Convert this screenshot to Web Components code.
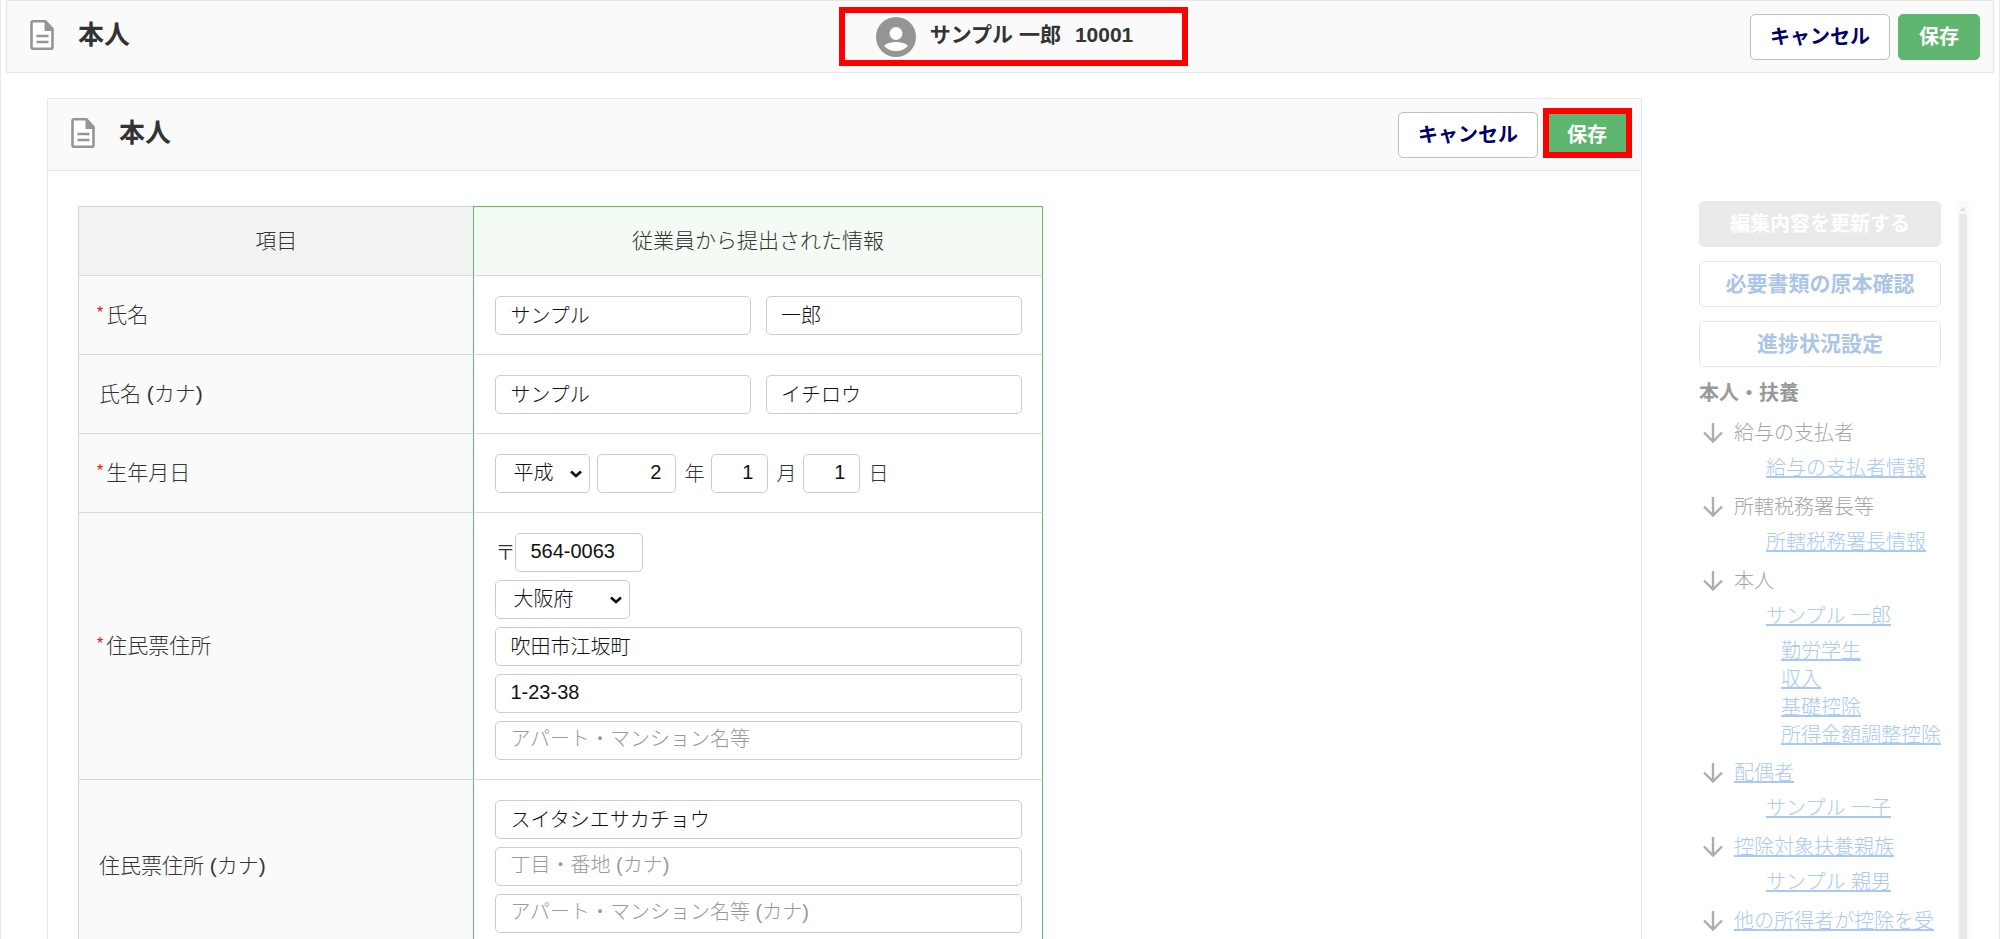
<!DOCTYPE html>
<html lang="ja">
<head>
<meta charset="utf-8">
<title>本人</title>
<style>
  :root {
    --line: #e6e6e6;
    --bar-bg: #fafafa;
    --green: #5fb66f;
  }
  body {
    margin: 0;
    background: #fff;
    color: #333;
    font: 20px/28px "Liberation Sans", "Noto Sans CJK JP", sans-serif;
  }
</style>
</head>
<body>
<year-end-page></year-end-page>

<script>
const define = (tag, html) => {
  customElements.define(tag, class extends HTMLElement {
    constructor() {
      super()
      this.attachShadow({ mode: 'open' }).innerHTML = html
    }
  })
}

define('ui-button', `
  <style>
    :host { display: block; }
    button {
      box-sizing: border-box;
      display: block;
      width: 100%;
      height: 46px;
      margin: 0;
      padding: 0 19px;
      border: 1px solid #bfbfbf;
      border-radius: 5px;
      background: #fff;
      color: #000066;
      font: inherit;
      font-weight: bold;
      white-space: nowrap;
      cursor: pointer;
    }
    :host([variant="primary"]) button {
      padding: 0 20px;
      border-color: var(--green);
      background: var(--green);
      color: #fff;
    }
    :host([variant="muted"]) button {
      border-color: #eaeaea;
      background: #eaeaea;
      color: #fff;
    }
    :host([variant="faded"]) button {
      border-color: #e5e5e5;
      color: #abc5e8;
      font-size: 21px;
    }
  </style>
  <button type="button"><slot></slot></button>
`)

// red frame laid over whatever is slotted in
define('callout-frame', `
  <style>
    :host { display: block; position: relative; }
    .frame {
      position: absolute;
      inset: var(--callout-inset, -6px);
      border: 6px solid #f00;
      pointer-events: none;
    }
  </style>
  <slot></slot>
  <div class="frame"></div>
`)

define('title-bar', `
  <style>
    :host {
      display: grid;
      grid-template-columns: 1fr auto 1fr;
      align-items: center;
      box-sizing: border-box;
      min-height: 73px;
      padding: 0 13px 0 22px;
      background: var(--bar-bg);
      border: 1px solid var(--line);
    }
    .title { display: flex; align-items: center; gap: 23px; }
    .title svg { display: block; margin-bottom: 4px; }
    h1 {
      margin: 0 0 4px;
      font-size: 26px;
      line-height: 36px;
    }
    .actions { display: flex; justify-content: flex-end; gap: 8px; }
  </style>
  <div class="title">
    <svg width="26" height="32" viewBox="0 0 26 32" aria-hidden="true">
      <path d="M4.300 2.300h12.200l7 7.500v18.500a1.500 1.500 0 0 1-1.500 1.500H4.300a1.800 1.800 0 0 1-1.800-1.800V4.100a1.800 1.800 0 0 1 1.800-1.800z" fill="#fff" stroke="#959595" stroke-width="2.600" stroke-linejoin="round"/>
      <path d="M15.500 2h1.500l7.500 8v2h-9z" fill="#959595"/>
      <path d="M7.500 17h12M7.500 23h12" stroke="#959595" stroke-width="2.400"/>
    </svg>
    <h1><slot name="title"></slot></h1>
  </div>
  <div><slot name="center"></slot></div>
  <div class="actions"><slot name="actions"></slot></div>
`)

define('user-badge', `
  <style>
    :host {
      display: flex;
      align-items: center;
      gap: 14px;
      font-size: 21px;
      font-weight: bold;
      white-space: nowrap;
    }
    svg { display: block; }
    .name { margin-bottom: 4px; }
  </style>
  <svg width="40" height="40" viewBox="0 0 40 40" aria-hidden="true">
    <circle cx="20" cy="20" r="20" fill="#959595"/>
    <ellipse cx="20" cy="16.500" rx="6.500" ry="6.500" fill="#fff"/>
    <path d="M8 29c3-3 7-4 12-4s9 1 12 4c-3 3-7 5-12 5s-9-2-12-5z" fill="#fff"/>
  </svg>
  <span class="name"><slot></slot></span>
  <span class="name"><slot name="code"></slot></span>
`)

const chevron = `
  <svg width="14" height="8" viewBox="0 0 14 8" aria-hidden="true">
    <path d="M2 1.500l5 4.500l5-4.500" fill="none" stroke="#111" stroke-width="2.600"/>
  </svg>
`

define('person-form', `
  <style>
    :host { display: block; padding: 35px 32px 0 30px; }
    table {
      width: 63%;
      border-collapse: separate;
      border-spacing: 0;
      table-layout: fixed;
    }
    .items { width: 41%; }
    th, td {
      box-sizing: border-box;
      border-bottom: 1px solid #d9d9d9;
    }
    th {
      border-left: 1px solid #d4d4d4;
      font-size: 21px;
      font-weight: 300;
    }
    thead th {
      height: 70px;
      padding: 0;
      border-top: 1px solid #d4d4d4;
      background: #f2f2f2;
    }
    thead .sent {
      border-top-color: #5cbd6c;
      border-left-color: #5cbd6c;
      border-right: 1px solid #5cbd6c;
      background: #f4fbf5;
    }
    tbody th {
      padding: 0 0 0 20px;
      background: var(--bar-bg);
      text-align: left;
    }
    tbody .required { padding-left: 18px; }
    .required::before {
      content: "*";
      margin-right: 3px;
      color: #f00;
      font-size: 16px;
      line-height: 0;
      vertical-align: 4px;
    }
    td {
      padding: 20px 20px 19px 21px;
      border-left: 1px solid #5cbd6c;
      border-right: 1px solid #5cbd6c;
      font-weight: 300;
    }
    .line { display: flex; align-items: center; }
    .line.pair { gap: 15px; }
    .stack { display: grid; gap: 8px; }
    .unit { padding: 0 7px 0 8px; }
    input, select {
      box-sizing: border-box;
      width: 100%;
      height: 39px;
      min-width: 0;
      margin: 0;
      padding: 0 14px 2px;
      border: 1px solid #ccc;
      border-radius: 5px;
      background: #fff;
      color: #111;
      font: inherit;
    }
    input::placeholder { color: #999; opacity: 1; }
    /* the arrow shares the select's grid cell */
    .select { display: grid; align-items: center; }
    .select > * { grid-area: 1 / 1; }
    .select svg { justify-self: end; margin-right: 7px; pointer-events: none; }
    select { appearance: none; padding-left: 17px; }
    .era { width: 95px; margin-right: 7px; }
    .year { width: 79px; text-align: right; }
    .day { width: 57px; text-align: right; }
    .post { width: 128px; }
    .pref { width: 135px; }
  </style>
  <table>
    <colgroup><col class="items"><col></colgroup>
    <thead>
      <tr><th scope="col">項目</th><th scope="col" class="sent">従業員から提出された情報</th></tr>
    </thead>
    <tbody>
      <tr>
        <th scope="row" class="required"><label for="sei">氏名</label></th>
        <td><div class="line pair">
          <input id="sei" value="サンプル">
          <input aria-label="名" value="一郎">
        </div></td>
      </tr>
      <tr>
        <th scope="row"><label for="sei-kana">氏名 (カナ)</label></th>
        <td><div class="line pair">
          <input id="sei-kana" value="サンプル">
          <input aria-label="名 (カナ)" value="イチロウ">
        </div></td>
      </tr>
      <tr>
        <th scope="row" class="required"><label for="era">生年月日</label></th>
        <td><div class="line">
          <div class="select era"><select id="era"><option>平成</option></select>${chevron}</div>
          <input id="year" class="year" value="2"><label class="unit" for="year">年</label>
          <input id="month" class="day" value="1"><label class="unit" for="month">月</label>
          <input id="day" class="day" value="1"><label class="unit" for="day">日</label>
        </div></td>
      </tr>
      <tr>
        <th scope="row" class="required"><label for="city">住民票住所</label></th>
        <td><div class="stack">
          <div class="line"><label for="post">〒</label><input id="post" class="post" value="564-0063"></div>
          <div class="select pref"><select aria-label="都道府県"><option>大阪府</option></select>${chevron}</div>
          <input id="city" value="吹田市江坂町">
          <input aria-label="丁目・番地" value="1-23-38">
          <input aria-label="アパート・マンション名等" placeholder="アパート・マンション名等">
        </div></td>
      </tr>
      <tr>
        <th scope="row"><label for="city-kana">住民票住所 (カナ)</label></th>
        <td><div class="stack">
          <input id="city-kana" value="スイタシエサカチョウ">
          <input aria-label="丁目・番地 (カナ)" placeholder="丁目・番地 (カナ)">
          <input aria-label="アパート・マンション名等 (カナ)" placeholder="アパート・マンション名等 (カナ)">
        </div></td>
      </tr>
    </tbody>
  </table>
`)

const GROUPS = [
  { title: '給与の支払者', links: ['給与の支払者情報'] },
  { title: '所轄税務署長等', links: ['所轄税務署長情報'] },
  { title: '本人', links: ['サンプル 一郎'], sub: ['勤労学生', '収入', '基礎控除', '所得金額調整控除'] },
  { title: '配偶者', linked: true, links: ['サンプル 一子'] },
  { title: '控除対象扶養親族', linked: true, links: ['サンプル 親男'] },
  { title: '他の所得者が控除を受', linked: true, links: [] },
]

const link = (text) => `<a href="#">${text}</a>`

const group = ({ title, linked, links, sub = [] }) => `
  <section>
    <h3>
      <svg width="20" height="20" viewBox="0 0 20 20" aria-hidden="true">
        <path d="M10 0v18M1 9.500l9 9l9-9" fill="none" stroke="#adadad" stroke-width="2.400"/>
      </svg>
      ${linked ? link(title) : `<span>${title}</span>`}
    </h3>
    ${links.map((text) => `<p>${link(text)}</p>`).join('')}
    ${sub.length ? `<ul>${sub.map((text) => `<li>${link(text)}</li>`).join('')}</ul>` : ''}
  </section>
`

define('section-nav', `
  <style>
    :host { display: flex; justify-content: space-between; }
    nav { width: 242px; white-space: nowrap; }
    .buttons { display: grid; gap: 14px; }
    h2 {
      margin: 11px 0 6px;
      color: #999;
      font-size: 20px;
      line-height: 30px;
    }
    section { margin-bottom: 4px; }
    h3 {
      display: flex;
      align-items: center;
      gap: 11px;
      margin: 0;
      padding-left: 4px;
      color: #a6a6a6;
      font-size: 20px;
      line-height: 38px;
      font-weight: 300;
    }
    p { margin: 0; padding-left: 67px; line-height: 32px; font-weight: 300; }
    ul { margin: 5px 0; padding: 0 0 0 82px; list-style: none; }
    li { line-height: 28px; font-weight: 300; }
    a { color: #a9c9f3; }
    .scroll {
      display: flex;
      flex-direction: column;
      align-items: center;
      gap: 3px;
      width: 12px;
      padding-top: 6px;
      box-sizing: border-box;
      background: #fafafa;
    }
    .scroll div { flex: 1; width: 8px; background: #e9e9e9; }
  </style>
  <nav>
    <div class="buttons">
      <ui-button variant="muted">編集内容を更新する</ui-button>
      <ui-button variant="faded">必要書類の原本確認</ui-button>
      <ui-button variant="faded">進捗状況設定</ui-button>
    </div>
    <h2>本人・扶養</h2>
    ${GROUPS.map(group).join('')}
  </nav>
  <div class="scroll" aria-hidden="true">
    <svg width="6" height="4" viewBox="0 0 6 4"><path d="M0 4l3-4l3 4z" fill="#ddd"/></svg>
    <div></div>
  </div>
`)

define('year-end-page', `
  <style>
    :host {
      display: block;
      box-sizing: border-box;
      height: 100vh;
      overflow: hidden;
      border: solid #e9e9e9;
      border-width: 0 1px;
    }
    .top { margin: 0 5px; }
    .user { --callout-inset: -10px -55px -9px -37px; }
    .save { --callout-inset: -4px -4px 0 -3px; }
    main {
      display: grid;
      grid-template-columns: minmax(0, 1fr) 270px;
      gap: 57px;
      padding: 25px 30px 0 46px;
    }
    .panel { border: solid var(--line); border-width: 0 1px; }
    .panel title-bar { border-width: 1px 0; }
    section-nav { margin-top: 103px; }
  </style>
  <title-bar class="top">
    <span slot="title">本人</span>
    <callout-frame slot="center" class="user">
      <user-badge>サンプル 一郎<span slot="code">10001</span></user-badge>
    </callout-frame>
    <ui-button slot="actions">キャンセル</ui-button>
    <ui-button slot="actions" variant="primary">保存</ui-button>
  </title-bar>
  <main>
    <div class="panel">
      <title-bar>
        <span slot="title">本人</span>
        <ui-button slot="actions">キャンセル</ui-button>
        <callout-frame slot="actions" class="save"><ui-button variant="primary">保存</ui-button></callout-frame>
      </title-bar>
      <person-form></person-form>
    </div>
    <section-nav></section-nav>
  </main>
`)
</script>
</body>
</html>
